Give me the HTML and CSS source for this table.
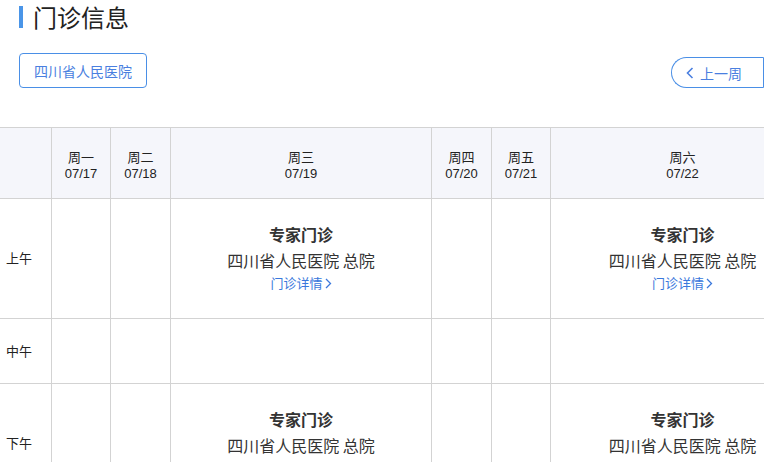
FILE: index.html
```html
<!DOCTYPE html>
<html lang="zh">
<head>
<meta charset="utf-8">
<link rel="stylesheet" href="styles.css">
</head>
<body>
<div class="page">
  <div class="top">
    <h1 class="title"><span class="bar"></span>门诊信息</h1>
    <div class="toolbar">
      <button class="hosp-btn">四川省人民医院</button>
      <div class="week-nav">
        <button class="week-btn prev"><svg class="chev" width="8" height="12" viewBox="0 0 8 12"><path d="M6.5 1 L1.5 6 L6.5 11" fill="none" stroke="currentColor" stroke-width="1.6"/></svg>上一周</button>
        <button class="week-btn next">下一周<svg class="chev" width="8" height="12" viewBox="0 0 8 12"><path d="M1.5 1 L6.5 6 L1.5 11" fill="none" stroke="currentColor" stroke-width="1.6"/></svg></button>
      </div>
    </div>
  </div>
  <div class="table-wrap">
    <div class="grid">
      <div class="cell head"></div>
      <div class="cell head"><span>周一</span><span class="num">07/17</span></div>
      <div class="cell head"><span>周二</span><span class="num">07/18</span></div>
      <div class="cell head"><span>周三</span><span class="num">07/19</span></div>
      <div class="cell head"><span>周四</span><span class="num">07/20</span></div>
      <div class="cell head"><span>周五</span><span class="num">07/21</span></div>
      <div class="cell head"><span>周六</span><span class="num">07/22</span></div>

      <div class="cell label">上午</div>
      <div class="cell"></div>
      <div class="cell"></div>
      <div class="cell slot">
        <div class="slot-type">专家门诊</div>
        <div class="slot-place">四川省人民医院 总院</div>
        <a class="slot-link">门诊详情<svg width="7" height="11" viewBox="0 0 7 11"><path d="M1 1 L5.5 5.5 L1 10" fill="none" stroke="currentColor" stroke-width="1.3"/></svg></a>
      </div>
      <div class="cell"></div>
      <div class="cell"></div>
      <div class="cell slot">
        <div class="slot-type">专家门诊</div>
        <div class="slot-place">四川省人民医院 总院</div>
        <a class="slot-link">门诊详情<svg width="7" height="11" viewBox="0 0 7 11"><path d="M1 1 L5.5 5.5 L1 10" fill="none" stroke="currentColor" stroke-width="1.3"/></svg></a>
      </div>

      <div class="cell label">中午</div>
      <div class="cell"></div>
      <div class="cell"></div>
      <div class="cell"></div>
      <div class="cell"></div>
      <div class="cell"></div>
      <div class="cell"></div>

      <div class="cell label">下午</div>
      <div class="cell"></div>
      <div class="cell"></div>
      <div class="cell slot">
        <div class="slot-type">专家门诊</div>
        <div class="slot-place">四川省人民医院 总院</div>
        <a class="slot-link">门诊详情<svg width="7" height="11" viewBox="0 0 7 11"><path d="M1 1 L5.5 5.5 L1 10" fill="none" stroke="currentColor" stroke-width="1.3"/></svg></a>
      </div>
      <div class="cell"></div>
      <div class="cell"></div>
      <div class="cell slot">
        <div class="slot-type">专家门诊</div>
        <div class="slot-place">四川省人民医院 总院</div>
        <a class="slot-link">门诊详情<svg width="7" height="11" viewBox="0 0 7 11"><path d="M1 1 L5.5 5.5 L1 10" fill="none" stroke="currentColor" stroke-width="1.3"/></svg></a>
      </div>
    </div>
  </div>
</div>
</body>
</html>
```
FILE: styles.css
```css
* { box-sizing: border-box; }
html, body { margin: 0; padding: 0; background: #fff; }
body {
  font-family: "Noto Sans CJK SC", "Liberation Sans", sans-serif;
  color: #333;
  overflow: hidden;
  width: 764px;
  height: 462px;
}
.page { width: 764px; height: 462px; overflow: hidden; }
.top { padding-left: 19px; }
.title {
  margin: 0;
  display: flex;
  align-items: center;
  height: 34px;
  font-size: 24px;
  font-weight: normal;
  color: #222;
  line-height: 34px;
}
.bar {
  width: 4px;
  height: 22px;
  background: #4a95e8;
  margin-right: 10px;
}
.toolbar {
  display: flex;
  align-items: flex-start;
  margin-top: 19px;
  height: 35px;
  white-space: nowrap;
}
.hosp-btn {
  flex: none;
  height: 35px;
  width: 128px;
  border: 1px solid #4a8fe6;
  border-radius: 4px;
  background: #fff;
  color: #4a7fe0;
  font-family: "Noto Sans CJK SC", sans-serif;
  font-size: 14px;
  padding: 0;
}
.week-nav {
  flex: none;
  display: flex;
  margin-left: 524px;
  margin-top: 4px;
}
.week-btn {
  display: flex;
  align-items: center;
  height: 31px;
  background: #fff;
  border: 1px solid #4a8fe6;
  color: #4a7fe0;
  font-family: "Noto Sans CJK SC", sans-serif;
  font-size: 14px;
  padding: 0;
  flex: none;
}
.prev {
  width: 92px;
  border-radius: 16px 0 0 16px;
  border-right: none;
  padding-left: 14px;
}
.prev .chev { margin-right: 6px; }
.next {
  width: 92px;
  border-radius: 0 16px 16px 0;
  padding-left: 18px;
}
.next .chev { margin-left: 6px; }
.table-wrap {
  margin-top: 39px;
  width: 764px;
  overflow: hidden;
}
.grid {
  display: grid;
  grid-template-columns: 52px 59px 60px 261px 60px 59px 264px;
  grid-template-rows: 71px 120px 65px 120px;
  width: 815px;
  border-top: 1px solid #d3d3d3;
}
.cell {
  border-right: 1px solid #d3d3d3;
  border-bottom: 1px solid #d3d3d3;
}
.head {
  background: #f5f6fb;
  display: flex;
  flex-direction: column;
  align-items: center;
  justify-content: center;
  font-size: 13px;
  line-height: 17px;
  color: #222;
  padding-top: 3px;
}
.head .num { font-family: "Liberation Sans", sans-serif; font-size: 13px; }
.label {
  display: flex;
  align-items: center;
  padding-left: 6px;
  padding-bottom: 2px;
  font-size: 13px;
  color: #222;
}
.slot {
  display: flex;
  flex-direction: column;
  align-items: center;
  padding-top: 22px;
}
.slot-type {
  font-size: 16px;
  font-weight: bold;
  line-height: 26px;
  color: #333;
}
.slot-place {
  font-size: 16px;
  line-height: 26px;
  color: #333;
}
.slot-link {
  display: flex;
  align-items: center;
  font-size: 13px;
  line-height: 20px;
  color: #3a78dc;
}
.slot-link svg { margin-left: 2px; }
```
